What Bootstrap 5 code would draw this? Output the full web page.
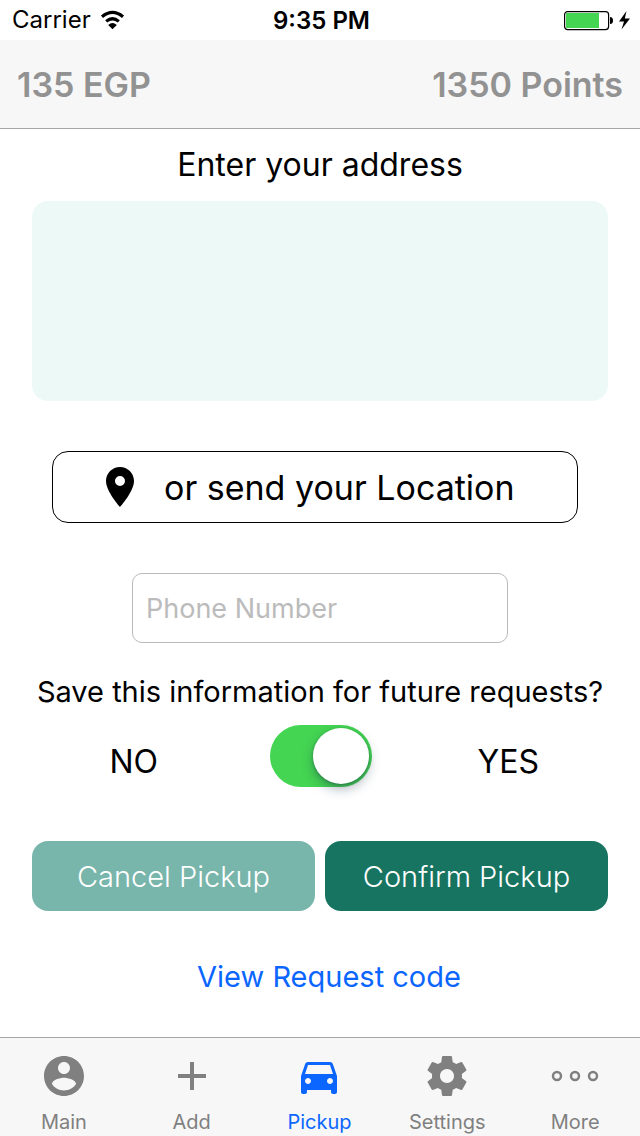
<!DOCTYPE html>
<html lang="en">
<head>
<meta charset="utf-8">
<meta name="viewport" content="width=device-width, initial-scale=1">
<title>Pickup</title>
<link href="https://cdn.jsdelivr.net/npm/bootstrap@5.3.0/dist/css/bootstrap.min.css" rel="stylesheet">
<style>
  body { font-family: Inter, "Liberation Sans", sans-serif; color: #000; background: #fff; }
  .status-bar { height: 40px; font-size: 24px; line-height: 42px; padding: 0 9px 0 12px; }
  .status-bar > * { flex: 1 1 0; }
  .clock { font-weight: 600; }
  .top-bar { height: 89px; padding: 0 17px; background: #f7f7f7; border-bottom: 1px solid #a7a7aa; color: #929292; font-size: 34px; font-weight: 600; }
  .pickup-form { padding: 16px 32px 0; }
  .address-label { font-size: 32px; line-height: 40px; margin-bottom: 16px; }
  .address-box, .address-box:focus { height: 200px; background: #ecf9f7; border: 0; border-radius: 16px; resize: none; font-size: 28px; }
  .location-btn { height: 72px; margin: 50px 30px 50px 20px; padding: 0 20px 0 43px; gap: 20px; border: 1px solid #000; border-radius: 16px; font-size: 34px; color: #000; }
  .phone-box { width: 376px; height: 70px; border: 1px solid #b9b9b9; border-radius: 10px; padding: 0 13px; font-size: 27px; }
  .phone-box::placeholder { color: #bbb; opacity: 1; }
  .save-label { font-size: 29px; line-height: 36px; margin: 31px -16px 0; }
  .switch-row { margin-top: 15px; padding: 0 6px 0 8px; font-size: 32px; line-height: 40px; }
  .switch-row > span { padding-top: 17px; }
  .form-check-input.save-switch { width: 102px; height: 62px; border: 0; border-radius: 31px; position: relative; background: #44d552; box-shadow: none; }
  .save-switch::after { content: ""; position: absolute; top: 3px; left: 3px; width: 56px; height: 56px; border-radius: 50%; background: #fff; box-shadow: 0 5px 12px rgba(20, 40, 70, .35), 0 1px 3px rgba(20, 40, 70, .35); }
  .save-switch:checked::after { left: 43px; }
  .save-switch:not(:checked) { background: #ddd; }
  .actions { gap: 10px; margin-top: 54px; }
  .action-btn { height: 70px; padding: 2px 0 0; border: 0; border-radius: 16px; font-size: 29px; font-weight: 300; color: #fff; }
  .cancel { background: #78b5ab; }
  .confirm { background: #177461; }
  .code-link { font-size: 29px; line-height: 36px; margin-top: 48px; padding-left: 18px; color: #0b66ff; }
  .tab-bar { height: 99px; background: #f7f7f7; border-top: 1px solid #a7a7aa; padding: 14px 1px 0 0; }
  .tab-bar a { color: #808080; font-size: 20px; line-height: 24px; }
  .tab-bar a.active { color: #0b66ff; }
  .tab-bar svg { margin-bottom: 10px; }
</style>
</head>
<body class="min-vh-100 d-flex flex-column">
<header>
  <div class="status-bar d-flex">
    <div class="d-flex align-items-center gap-2">
      <span>Carrier</span>
      <svg width="29" height="24" viewBox="0 0 29 24" fill="none" stroke="#000" stroke-width="3.2" aria-hidden="true">
        <path d="M3 8.700Q13.500 .2 24 8.700"/><path d="M7.200 13.400Q13.500 8.100 19.800 13.400"/><path d="M13.500 21.200 9.200 16.900Q13.500 13.300 17.800 16.900Z" fill="#000" stroke="none"/>
      </svg>
    </div>
    <div class="clock text-center">9:35 PM</div>
    <div class="d-flex align-items-center justify-content-end">
      <svg width="67" height="24" viewBox="0 0 67 24" aria-hidden="true">
        <rect x=".6" y="3.6" width="44" height="18" rx="3" fill="none" stroke="#000" stroke-width="1.2"/>
        <path fill="#44d552" d="M2 5h33v15H2z"/><path d="M46 9q3 0 3 3.500t-3 3.500z"/>
        <path d="M62.500 3 55 13.500h5L57.500 21.500 66 10.500h-5.200z"/>
      </svg>
    </div>
  </div>
  <div class="top-bar d-flex align-items-center justify-content-between">
    <span>135 EGP</span><span>1350 Points</span>
  </div>
</header>

<main class="flex-grow-1">
  <form class="pickup-form">
    <label for="address" class="address-label d-block text-center">Enter your address</label>
    <textarea id="address" class="address-box form-control"></textarea>
    <div class="d-flex">
      <button type="button" class="location-btn btn d-flex flex-grow-1 align-items-center text-nowrap">
        <svg class="flex-shrink-0" width="48" height="48" viewBox="0 0 24 24" aria-hidden="true"><path d="M12 2C8.130 2 5 5.130 5 9c0 5.250 7 13 7 13s7-7.750 7-13c0-3.870-3.130-7-7-7zm0 9.500a2.500 2.500 0 1 1 0-5 2.500 2.500 0 0 1 0 5z"/></svg>
        <span>or send your Location</span>
      </button>
    </div>
    <input type="tel" class="phone-box form-control mx-auto" placeholder="Phone Number" aria-label="Phone Number">
    <label for="save" class="save-label d-block text-center text-nowrap">Save this information for future requests?</label>
    <div class="switch-row row gx-0 text-center">
      <span class="col">NO</span>
      <div class="col"><input type="checkbox" role="switch" id="save" class="save-switch form-check-input d-block mx-auto my-0" checked></div>
      <span class="col">YES</span>
    </div>
    <div class="actions d-flex">
      <button type="button" class="action-btn cancel btn flex-fill w-50">Cancel Pickup</button>
      <button type="submit" class="action-btn confirm btn flex-fill w-50">Confirm Pickup</button>
    </div>
    <div class="code-link text-center"><a href="#code" class="text-decoration-none text-reset">View Request code</a></div>
  </form>
</main>

<nav class="tab-bar row gx-0 text-center" aria-label="Tabs">
  <a href="#main" class="col text-decoration-none d-flex flex-column align-items-center">
    <svg width="48" height="48" viewBox="0 0 24 24" fill="currentColor" aria-hidden="true"><path d="M12 2C6.480 2 2 6.480 2 12s4.480 10 10 10 10-4.480 10-10S17.520 2 12 2zm0 3c1.660 0 3 1.340 3 3s-1.340 3-3 3-3-1.340-3-3 1.340-3 3-3zm0 14.200c-2.500 0-4.710-1.280-6-3.220.03-1.990 4-3.080 6-3.080 1.990 0 5.970 1.090 6 3.080-1.290 1.940-3.500 3.220-6 3.220z"/></svg>Main</a>
  <a href="#add" class="col text-decoration-none d-flex flex-column align-items-center">
    <svg width="48" height="48" viewBox="0 0 24 24" fill="currentColor" aria-hidden="true"><path d="M19 13h-6v6h-2v-6H5v-2h6V5h2v6h6v2z"/></svg>Add</a>
  <a href="#pickup" class="active col text-decoration-none d-flex flex-column align-items-center" aria-current="page">
    <svg width="48" height="48" viewBox="0 0 24 24" fill="currentColor" aria-hidden="true"><path d="M18.920 6.010C18.720 5.420 18.160 5 17.500 5h-11c-.66 0-1.210.42-1.420 1.010L3 12v8c0 .55.45 1 1 1h1c.55 0 1-.45 1-1v-1h12v1c0 .55.45 1 1 1h1c.55 0 1-.45 1-1v-8l-2.080-5.990zM6.500 16c-.83 0-1.500-.67-1.500-1.500S5.670 13 6.500 13s1.500.67 1.500 1.500S7.330 16 6.500 16zm11 0c-.83 0-1.500-.67-1.500-1.500s.67-1.500 1.500-1.500 1.500.67 1.500 1.500-.67 1.500-1.500 1.500zM5 11l1.500-4.500h11L19 11H5z"/></svg>Pickup</a>
  <a href="#settings" class="col text-decoration-none d-flex flex-column align-items-center">
    <svg width="48" height="48" viewBox="0 0 24 24" fill="currentColor" aria-hidden="true"><path d="M19.430 12.980c.04-.32.07-.64.07-.98s-.03-.66-.07-.98l2.110-1.650c.19-.15.24-.42.12-.64l-2-3.460c-.12-.22-.39-.3-.61-.22l-2.490 1c-.52-.4-1.080-.73-1.690-.98l-.38-2.650C14.460 2.180 14.250 2 14 2h-4c-.25 0-.46.18-.49.42l-.38 2.650c-.61.25-1.170.59-1.690.98l-2.490-1c-.23-.09-.49 0-.61.22l-2 3.460c-.13.22-.07.49.12.64l2.110 1.650c-.04.32-.07.65-.07.98s.03.66.07.98l-2.110 1.650c-.19.15-.24.42-.12.64l2 3.460c.12.22.39.3.61.22l2.490-1c.52.4 1.080.73 1.690.98l.38 2.650c.03.24.24.42.49.42h4c.25 0 .46-.18.49-.42l.38-2.650c.61-.25 1.170-.59 1.690-.98l2.490 1c.23.09.49 0 .61-.22l2-3.460c.12-.22.07-.49-.12-.64l-2.110-1.650zM12 15.500c-1.930 0-3.500-1.570-3.500-3.500s1.570-3.500 3.500-3.500 3.500 1.570 3.500 3.500-1.570 3.500-3.500 3.500z"/></svg>Settings</a>
  <a href="#more" class="col text-decoration-none d-flex flex-column align-items-center">
    <svg width="48" height="48" viewBox="0 0 48 48" fill="none" stroke="currentColor" stroke-width="2.500" aria-hidden="true"><circle cx="6" cy="24" r="4"/><circle cx="24" cy="24" r="4"/><circle cx="42" cy="24" r="4"/></svg>More</a>
</nav>
<script src="https://cdn.jsdelivr.net/npm/bootstrap@5.3.0/dist/js/bootstrap.bundle.min.js"></script>
</body>
</html>
